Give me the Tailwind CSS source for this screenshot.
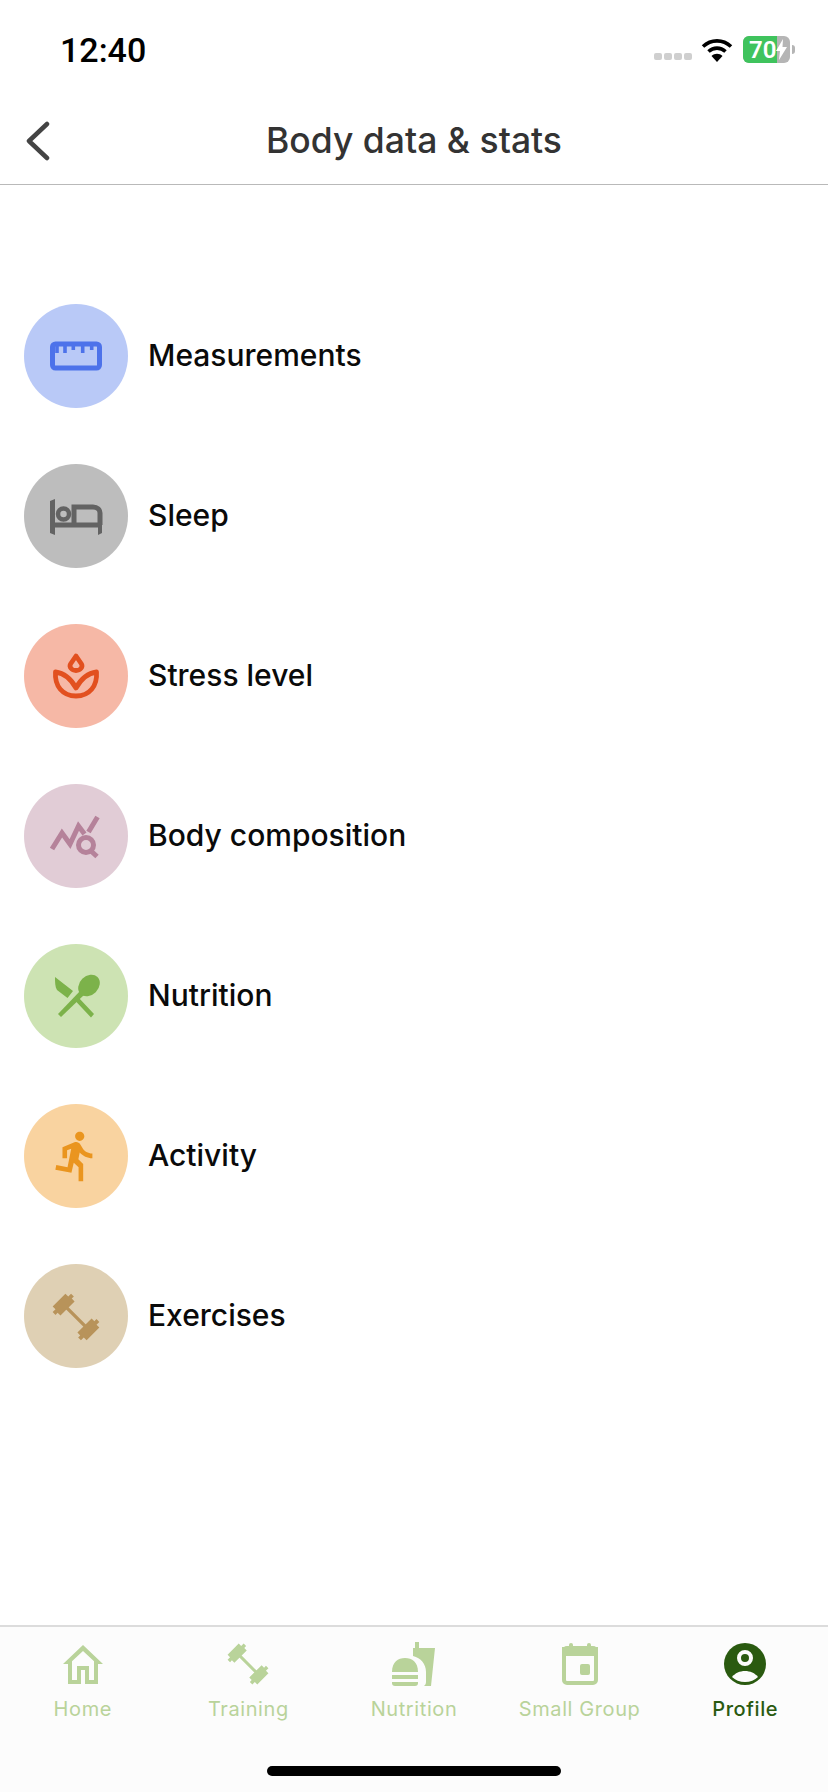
<!DOCTYPE html>
<html lang="en">
<head>
  <meta charset="UTF-8" />
  <meta name="viewport" content="width=device-width, initial-scale=1.0"/>
  <title>Body data &amp; stats</title>
  <script src="https://cdn.jsdelivr.net/npm/@tailwindcss/browser@4"></script>
</head>
<body class="bg-white font-['Inter',sans-serif]">
  <svg class="hidden" width="0" height="0">
    <!-- barbell, drawn lying flat, rotated where it is used -->
    <symbol id="barbell" viewBox="-32 -16 64 32">
      <rect x="-14" y="-1.700" width="28" height="3.400"/>
      <path d="M-24 -9h4v-4h4v3h4v20h-4v3h-4v-4h-4z"/>
      <path d="M24 -9h-4v-4h-4v3h-4v20h4v3h4v-4h4z"/>
    </symbol>
  </svg>

  <div class="flex h-[1792px] w-[828px] flex-col overflow-hidden">
    <!-- Status bar -->
    <div class="flex h-[88px] items-center justify-between pl-[60px] pr-[33px] pt-[11px]">
      <span class="text-[34px] font-medium leading-none text-black font-['Roboto',sans-serif]">12:40</span>
      <div class="flex items-center">
        <div class="mr-[9px] mt-[13px] flex gap-[2px]">
          <span class="h-[7px] w-[8px] rounded-[2px] bg-[#cfcfcf]"></span>
          <span class="h-[7px] w-[8px] rounded-[2px] bg-[#cfcfcf]"></span>
          <span class="h-[7px] w-[8px] rounded-[2px] bg-[#cfcfcf]"></span>
          <span class="h-[7px] w-[8px] rounded-[2px] bg-[#cfcfcf]"></span>
        </div>
        <svg class="mr-[10px]" width="32" height="24" viewBox="0 0 32 24" fill="none" stroke="#000" stroke-width="3.6">
          <path d="M2 8.500C10 1 22 1 30 8.500"/>
          <path d="M7.500 13.500C12.500 9 19.500 9 24.500 13.500"/>
          <path d="M16 24l-5.500-6c3-3 8-3 11 0z" fill="#000" stroke="none"/>
        </svg>
        <div class="relative flex h-[27px] w-[47px] items-center overflow-hidden rounded-[6px] bg-[#b5b5b5]">
          <div class="flex h-full w-[34px] items-center bg-[#3fc35d] pl-[6px] text-[24px] font-semibold leading-none text-white font-['Roboto',sans-serif]">70</div>
          <svg class="absolute left-[32px] top-[3px]" width="13" height="21" viewBox="0 0 13 21" fill="#fff"><path d="M8 0L1 12h4l-1 9 8-13H7.500z"/></svg>
        </div>
        <div class="ml-[2px] h-[9px] w-[3px] rounded-r-full bg-[#b5b5b5]"></div>
      </div>
    </div>

    <!-- Header -->
    <div class="relative flex h-[97px] shrink-0 items-center justify-center border-b border-[#b9b9b9] pt-[10px]">
      <svg class="absolute left-[25px] top-[33px]" width="26" height="40" viewBox="0 0 26 40" fill="none" stroke="#444" stroke-width="4.5" stroke-linecap="round" stroke-linejoin="round">
        <path d="M22 3L4 20l18 17"/>
      </svg>
      <h1 class="text-[35.500px] font-medium leading-none text-[#333]">Body data &amp; stats</h1>
    </div>

    <!-- List -->
    <div class="flex flex-1 flex-col gap-[56px] pl-[24px] pt-[119px]">
      <div class="flex items-center gap-[20px]">
        <div class="h-[104px] w-[104px] rounded-full bg-[#b9c9f7]">
          <svg width="104" height="104" viewBox="0 0 104 104" fill="none" stroke="#4d72ea" stroke-width="5">
            <rect x="28.500" y="40" width="47" height="24" rx="3"/>
            <path d="M33 40v9M41 40v9M49.300 40v6M58.700 40v9M67.700 40v6" stroke-width="3.600"/>
          </svg>
        </div>
        <span class="pb-[2px] text-[30px] font-medium text-[#0a0a0a]">Measurements</span>
      </div>

      <div class="flex items-center gap-[20px]">
        <div class="h-[104px] w-[104px] rounded-full bg-[#bdbdbd]">
          <svg width="104" height="104" viewBox="0 0 104 104" fill="none" stroke="#636363" stroke-width="5">
            <path d="M28 61h48M50 60V43h19c4.500 0 7 3 7 6v12"/>
            <path d="M26 37l5 -2v36l-5 -2zM78 60v9l-4 2v-11z" fill="#636363" stroke="none"/>
            <circle cx="39.500" cy="50" r="5.500" stroke-width="4.500"/>
          </svg>
        </div>
        <span class="pb-[2px] text-[30px] font-medium text-[#0a0a0a]">Sleep</span>
      </div>

      <div class="flex items-center gap-[20px]">
        <div class="h-[104px] w-[104px] rounded-full bg-[#f6b8a6]">
          <svg width="104" height="104" viewBox="0 0 104 104" fill="none" stroke="#e2501f" stroke-width="4.800" stroke-linejoin="round">
            <path d="M52 32l5.500 8c1.500 3 -1 6.500 -5.500 6.500s-7 -3.500 -5.500 -6.500z"/>
            <path d="M31.500 48c8 1 15 6 20.500 16c5.500 -10 12.500 -15 20.500 -16c1 14 -7 24 -20.500 24s-21.500 -10 -20.500 -24z"/>
          </svg>
        </div>
        <span class="pb-[2px] text-[30px] font-medium text-[#0a0a0a]">Stress level</span>
      </div>

      <div class="flex items-center gap-[20px]">
        <div class="h-[104px] w-[104px] rounded-full bg-[#e1ccd6]">
          <svg width="104" height="104" viewBox="0 0 104 104" fill="none" stroke="#b5829a" stroke-width="5">
            <path d="M28 65l10 -16l8 11l8.500 -18l6 8M64.500 48l9 -15"/>
            <circle cx="62" cy="61" r="7.500"/>
            <path d="M67 67l6 5.500"/>
          </svg>
        </div>
        <span class="pb-[2px] text-[30px] font-medium text-[#0a0a0a]">Body composition</span>
      </div>

      <div class="flex items-center gap-[20px]">
        <div class="h-[104px] w-[104px] rounded-full bg-[#cde3b3]">
          <svg width="104" height="104" viewBox="0 0 104 104" fill="#7cb24a" stroke="none">
            <ellipse cx="65" cy="41.500" rx="12" ry="9.500" transform="rotate(-45 65 41.500)"/>
            <path d="M57 46l4 4L37 73l-3 -3z"/>
            <path d="M31 33l18 14l-5.500 7L33 46c-2 -3 -2 -8 -2 -13zM54 53l16 17l-3 3.500L51 56.500z"/>
          </svg>
        </div>
        <span class="pb-[2px] text-[30px] font-medium text-[#0a0a0a]">Nutrition</span>
      </div>

      <div class="flex items-center gap-[20px]">
        <div class="h-[104px] w-[104px] rounded-full bg-[#f9d3a0]">
          <svg width="104" height="104" viewBox="0 0 104 104" fill="#ea951f">
            <path transform="translate(24.700 24.300) scale(2.300)" d="M13.490 5.480c1.100 0 2-.9 2-2s-.9-2-2-2-2 .9-2 2 .9 2 2 2zm-3.600 13.900l1-4.400 2.100 2v6h2v-7.500l-2.100-2 .6-3c1.300 1.500 3.300 2.500 5.500 2.500v-2c-1.900 0-3.500-1-4.300-2.400l-1-1.600c-.4-.6-1-1-1.700-1-.3 0-.5.1-.8.1l-5.200 2.200v4.700h2v-3.400l1.800-.7-1.600 8.100-4.900-1-.4 2 7 1.400z"/>
          </svg>
        </div>
        <span class="pb-[2px] text-[30px] font-medium text-[#0a0a0a]">Activity</span>
      </div>

      <div class="flex items-center gap-[20px]">
        <div class="h-[104px] w-[104px] rounded-full bg-[#dfd0b4]">
          <svg width="104" height="104" viewBox="0 0 104 104" fill="#b8935a">
            <use href="#barbell" x="-32" y="-16" width="64" height="32" transform="translate(52 53) rotate(45)"/>
          </svg>
        </div>
        <span class="pb-[2px] text-[30px] font-medium text-[#0a0a0a]">Exercises</span>
      </div>
    </div>

    <!-- Tab bar -->
    <div class="relative h-[167px] shrink-0 border-t-2 border-[#dcdcdc] bg-[#fcfcfc]">
      <div class="grid grid-cols-5 pt-[15px]">
        <div class="flex flex-col items-center gap-[11px]">
          <svg width="44" height="44" viewBox="0 0 44 44" fill="none" stroke="#b9d39a" stroke-width="4">
            <path d="M9 19v21h9V26h8v14h9V19"/>
            <path d="M2 22L22 3l20 19h-6L22 9 8 22z" fill="#b9d39a" stroke="none"/>
          </svg>
          <span class="text-[20px] leading-[24px] tracking-[0.6px] text-[#b9d39a]">Home</span>
        </div>
        <div class="flex flex-col items-center gap-[11px]">
          <svg width="44" height="44" viewBox="0 0 44 44" fill="#b9d39a">
            <use href="#barbell" x="-28" y="-14" width="56" height="28" transform="translate(22 22) rotate(45)"/>
          </svg>
          <span class="text-[20px] leading-[24px] tracking-[0.6px] text-[#b9d39a]">Training</span>
        </div>
        <div class="flex flex-col items-center gap-[11px]">
          <svg width="44" height="44" viewBox="0 0 44 44" fill="#b9d39a">
            <path d="M23 0h4v6h16l-4 38h-7c1 -1 2 -2 2 -4V30c0 -8 -5 -14 -13 -16V6h2z"/>
            <path d="M0 30c0 -10 6 -14 13 -14s13 4 13 14z"/>
            <rect x="0" y="33" width="26" height="4"/>
            <path d="M0 40h26v1c0 2 -1 3 -3 3H3c-2 0 -3 -1 -3 -3z"/>
          </svg>
          <span class="text-[20px] leading-[24px] tracking-[0.6px] text-[#b9d39a]">Nutrition</span>
        </div>
        <div class="flex flex-col items-center gap-[11px]">
          <svg width="44" height="44" viewBox="0 0 44 44" fill="none">
            <rect x="6" y="6" width="32" height="35" rx="3" stroke="#b9d39a" stroke-width="4"/>
            <rect x="4" y="5" width="36" height="9" fill="#b9d39a"/>
            <rect x="11" y="1" width="4" height="6" rx="2" fill="#b9d39a"/>
            <rect x="29" y="1" width="4" height="6" rx="2" fill="#b9d39a"/>
            <rect x="22" y="22" width="10" height="11" rx="2" fill="#b9d39a"/>
          </svg>
          <span class="text-[20px] leading-[24px] tracking-[0.6px] text-[#b9d39a]">Small Group</span>
        </div>
        <div class="flex flex-col items-center gap-[11px]">
          <svg width="44" height="44" viewBox="0 0 44 44">
            <circle cx="22" cy="22" r="21" fill="#2a5a10"/>
            <circle cx="22" cy="16" r="6" fill="none" stroke="#fcfcfc" stroke-width="4"/>
            <path d="M9 35c3 -4 8 -6 13 -6s10 2 13 6c-3 3 -8 5 -13 5s-10 -2 -13 -5z" fill="#fcfcfc"/>
          </svg>
          <span class="text-[20px] font-medium leading-[24px] tracking-[0.6px] text-[#2a5a10]">Profile</span>
        </div>
      </div>
      <!-- home indicator -->
      <div class="absolute bottom-[16px] left-[267px] h-[10px] w-[294px] rounded-full bg-black"></div>
    </div>
  </div>
</body>
</html>
